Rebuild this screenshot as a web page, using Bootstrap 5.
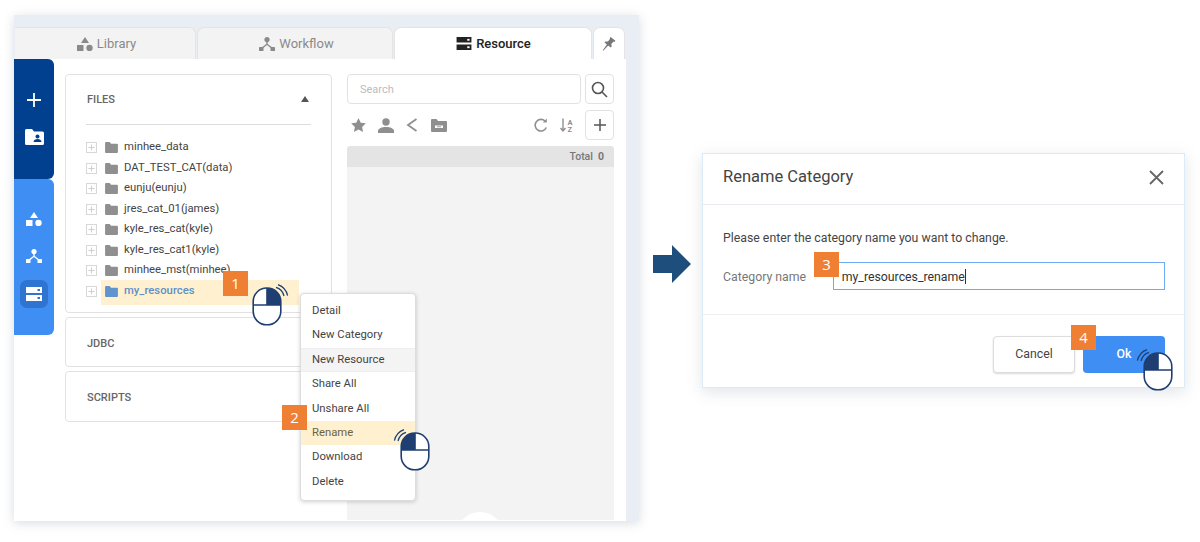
<!DOCTYPE html>
<html lang="en">
<head>
<meta charset="utf-8">
<title>Rename Category</title>
<link rel="stylesheet" href="https://cdn.jsdelivr.net/npm/bootstrap@5.3.0/dist/css/bootstrap.min.css">
<style>
html,body{height:542px;overflow:hidden;background:#fff}
body{font-family:Roboto,"Liberation Sans",sans-serif;font-size:11px;color:#444;position:relative}
.stage{padding:15px 0 0 14px;height:542px}
.win{width:625px;height:506px;background:#e9edf4;box-shadow:0 2px 10px rgba(120,130,150,.28);padding-top:12px;position:relative;overflow:hidden;flex:none}
.tabbar{height:32px;padding-left:1px;padding-right:13px;gap:1px}
.wtab{background:#f3f3f3;border:1px solid #e4e4e4;border-bottom:0;border-radius:7px 7px 0 0;color:#8a8a8a;font-size:13px;gap:4px;padding-left:3px}
.wtab svg{fill:#8a8a8a}
.t1{width:181px;border-left:0;border-top-left-radius:0}.t2{width:196px}
.t3{width:198px;background:#fff;color:#222;font-weight:500;padding-left:1px}
.t3 svg{fill:#222}
.t4{width:32px;background:#fff;padding-left:0}
.wbody{height:462px;margin:0 13px 0 0;background:#fff}
.rail{width:40px;flex:none;height:276px}
.rail-a{height:120px;background:#00408f;border-radius:0 6px 6px 0;padding-top:33px;gap:21px}
.rail-b{height:156px;background:#3e8ef3;border-radius:0 6px 6px 0;padding-top:33px;gap:14px}
.rail-on{width:28px;height:28px;background:#2f74d0;border-radius:7px}
.leftcol{width:267px;margin:15px 0 0 11px;flex:none;gap:4px}
.pane{border:1px solid #e2e2e2;border-radius:4px;box-shadow:none}
.pane-h{font-size:11px;font-weight:500;color:#666;padding:4px 0 0 21px}
.files{height:239px}
.files-h{height:50px;margin:0 20px 0 20px;padding:2px 1px 0 1px;border-bottom:1px solid #ddd;font-weight:500;color:#666}
.caret{width:0;height:0;border:4px solid transparent;border-top:0;border-bottom:6px solid #555;margin:-4px 1px 0 0}
.tree{padding:12.500px 0 0 20px;margin:0;list-style:none}
.tree li{height:20.5px;display:flex;align-items:center;color:#444;font-size:11.3px}
.pbox{width:11px;height:11px;margin-right:8px;flex:none}
.tree .fold{margin-right:6px;flex:none}
.tree .sel{color:#5f8fc9;background:#fff1cf;height:25px;margin:-1px 32px -3px -4px;width:199px;padding:0 0 2px 4px;font-weight:500}
.jdbc{height:50px}.scr{height:51px}
.rightcol{width:267px;margin:15px 0 0 15px;flex:none}
.srch{height:30px;gap:4px}
.srch .form-control{height:30px;font-size:11px;padding-left:12px;border-color:#e2e2e2;border-radius:4px;color:#444}
.srch .form-control::placeholder{color:#bcbcbc}
.sqbtn{width:29px;height:30px;padding:0;border:1px solid #e2e2e2;border-radius:4px;background:#fff;flex:none}
.tools{height:30px;margin-top:6px;padding-left:4px}
.tools svg{display:block}
.tools-l{gap:12px}
.tools-r{gap:10px}
.totbar{height:21px;background:#e4e4e4;border-radius:3px 3px 0 0;margin-top:6px;padding-right:10px;font-size:10.5px;font-weight:500;color:#777}
.totbar b{margin-left:5px;font-weight:700}
.grid-bg{height:353px;background:#f3f3f3;position:relative;overflow:hidden}
.blob{position:absolute;left:109px;top:345px;width:48px;height:48px;border-radius:50%;background:#fff}
.ctx{position:absolute;left:286px;top:278px;width:116px;height:208px;border:1px solid #ddd;border-radius:4px;box-shadow:0 1px 4px rgba(0,0,0,.18);padding:5px 0 6px;background:#fff;z-index:3}
.ctx .list-group-item{border:0;border-radius:0;padding:0 0 0 11px;height:24.4px;line-height:24.4px;font-size:11.3px;color:#444;background:transparent}
.ctx .hov{background:#f4f4f4;border-top:1px solid #eee;border-bottom:1px solid #eee;line-height:22.4px}
.ctx .ren{background:#fff1cf;color:#6d6243}
.step{position:absolute;width:25px;height:25px;background:#ef7f32;color:#fff;font-size:15px;display:flex;align-items:center;justify-content:center;z-index:5;font-family:"Open Sans",sans-serif}
.mou{position:absolute;z-index:6}
.tcaret{position:absolute;left:965px;top:269px;width:1px;height:15px;background:#333;z-index:4}
.arrow-box{margin:230px 0 0 14px;flex:none}
.dlg{width:483px;height:235px;margin:138px 0 0 11px;border:1px solid #dcebf8;border-radius:0;box-shadow:0 4px 14px rgba(120,130,150,.22);flex:none;position:relative}
.dlg-h{height:51px;padding:0 20px 4px 20px;border-bottom:1px solid #e6e9ee;font-size:16.5px;color:#444}
.dlg-b{height:110px;padding:24px 19px 0 20px;border-bottom:1px solid #eceef1;font-size:12.3px;color:#444}
.dlg-l{width:110px;color:#777;padding-top:2px}
.dlg-i{width:333px;height:28px;border:1px solid #6fabf5;border-radius:0;font-size:12.3px;padding:1px 8px 0;color:#333;box-shadow:none;background:#fff}
.frow{margin-top:15px}
.dlg-f{padding:21px 19px 0 0;gap:8px}
.bc{width:82px;height:37px;font-size:12.3px;border:1px solid #ddd;border-radius:4px;background:#fff;color:#444;box-shadow:0 1px 2px rgba(0,0,0,.15);padding:0}
.bo{width:82px;height:37px;font-size:12.3px;border:0;border-radius:4px;background:#3e8ef3;color:#fff;font-weight:500;padding:0}
</style>
</head>
<body>
<svg width="0" height="0" style="position:absolute">
<defs>
<symbol id="i-lib" viewBox="0 0 16 14"><path d="M8 0l4 6H4z"/><rect x="0" y="8" width="6.5" height="6"/><circle cx="12.5" cy="11" r="3.2"/></symbol>
<symbol id="i-flow" viewBox="0 0 16 14"><circle cx="8" cy="2.6" r="2.6"/><rect x="0" y="10" width="4.5" height="4" rx=".6"/><rect x="11.5" y="10" width="4.5" height="4" rx=".6"/><path d="M7.3 4h1.4v3L13 10.3l-1 1L8 8.1l-4 3.2-1-1L7.3 7z"/></symbol>
<symbol id="i-srv" viewBox="0 0 16 14"><path d="M0 0h16v6H0zM0 8h16v6H0z"/><rect x="11.5" y="2" width="2.5" height="2" fill="#fff"/><rect x="11.5" y="10" width="2.5" height="2" fill="#fff"/></symbol>
<symbol id="i-fold" viewBox="0 0 14 12"><path d="M0 1a1 1 0 0 1 1-1h4l1.500 2H13a1 1 0 0 1 1 1v8a1 1 0 0 1-1 1H1a1 1 0 0 1-1-1z"/></symbol>
<symbol id="i-plus" viewBox="0 0 11 11"><rect x=".5" y=".5" width="10" height="10" fill="#fff" stroke="#d8d8d8"/><path d="M5.500 2.500v6M2.500 5.500h6" stroke="#cfcfcf" fill="none"/></symbol>
<symbol id="i-mouse" viewBox="0 0 40 42">
<rect x="1.2" y="4" width="27.6" height="36.8" rx="13.5" fill="#fff" stroke="#1f3f73" stroke-width="1.6"/>
<path d="M15 4h.5A13.3 13.3 0 0 1 28.800 17.300V21H15z" fill="#1f3f73"/>
<path d="M1.200 21h27.600M15 4v17" stroke="#1f3f73" stroke-width="1.6" fill="none"/>
<path d="M24 3.400a12 12 0 0 1 8 8.600M26 .6a15 15 0 0 1 9.600 11" stroke="#1f3f73" stroke-width="1.2" fill="none"/>
</symbol>
</defs>
</svg>

<div class="stage d-flex align-items-start">
  <div class="win">
    <ul class="nav tabbar d-flex flex-nowrap">
      <li class="wtab t1 d-flex align-items-center justify-content-center"><svg width="16" height="14"><use href="#i-lib"/></svg>Library</li>
      <li class="wtab t2 d-flex align-items-center justify-content-center"><svg width="16" height="14"><use href="#i-flow"/></svg>Workflow</li>
      <li class="wtab t3 d-flex align-items-center justify-content-center"><svg width="16" height="13"><use href="#i-srv"/></svg>Resource</li>
      <li class="wtab t4 d-flex align-items-center justify-content-center"><svg width="14" height="16" viewBox="0 0 14 16" style="fill:#777"><path d="M8.600 1l4.800 3.800-.9 1.100-.9-.5-2.300 2.500.4 2.600-.9 1.100-2.600-2.100-4.900 5.200-.5-.4L4.900 8.600 2.500 6.600l.9-1.100 2.600.1 2.100-2.800-.4-.8z"/></svg></li>
    </ul>
    <div class="wbody d-flex">
      <div class="rail d-flex flex-column">
        <div class="rail-a d-flex flex-column align-items-center">
          <svg width="16" height="16" viewBox="0 0 16 16"><path d="M8 1v14M1 8h14" stroke="#fff" stroke-width="1.800" fill="none"/></svg>
          <svg width="19" height="16" viewBox="0 0 19 16"><path d="M0 1.500A1.500 1.500 0 0 1 1.500 0H7l2 2.500h8.500A1.500 1.500 0 0 1 19 4v10.500a1.500 1.500 0 0 1-1.500 1.500h-16A1.500 1.500 0 0 1 0 14.500z" fill="#fff"/><circle cx="12.500" cy="7.500" r="2" fill="#00408f"/><path d="M8.500 13c0-2 2-3 4-3s4 1 4 3z" fill="#00408f"/></svg>
        </div>
        <div class="rail-b d-flex flex-column align-items-center">
          <svg width="16" height="14" style="fill:#fff"><use href="#i-lib"/></svg>
          <svg width="16" height="16" viewBox="0 0 16 14" style="fill:#fff;margin-top:8px"><use href="#i-flow"/></svg>
          <div class="rail-on d-flex align-items-center justify-content-center" style="margin-top:2px"><svg width="16" height="14" viewBox="0 0 16 14"><path d="M0 0h16v6H0zM0 8h16v6H0z" fill="#fff"/><rect x="11.500" y="2" width="2.500" height="2" fill="#2f74d0"/><rect x="11.500" y="10" width="2.500" height="2" fill="#2f74d0"/></svg></div>
        </div>
      </div>
      <div class="leftcol d-flex flex-column">
        <div class="card pane files">
          <div class="files-h d-flex align-items-center justify-content-between"><span>FILES</span><span class="caret"></span></div>
          <ul class="tree">
            <li><svg class="pbox"><use href="#i-plus"/></svg><svg class="fold" width="13" height="11" fill="#8f8f8f"><use href="#i-fold"/></svg>minhee_data</li>
            <li><svg class="pbox"><use href="#i-plus"/></svg><svg class="fold" width="13" height="11" fill="#8f8f8f"><use href="#i-fold"/></svg>DAT_TEST_CAT(data)</li>
            <li><svg class="pbox"><use href="#i-plus"/></svg><svg class="fold" width="13" height="11" fill="#8f8f8f"><use href="#i-fold"/></svg>eunju(eunju)</li>
            <li><svg class="pbox"><use href="#i-plus"/></svg><svg class="fold" width="13" height="11" fill="#8f8f8f"><use href="#i-fold"/></svg>jres_cat_01(james)</li>
            <li><svg class="pbox"><use href="#i-plus"/></svg><svg class="fold" width="13" height="11" fill="#8f8f8f"><use href="#i-fold"/></svg>kyle_res_cat(kyle)</li>
            <li><svg class="pbox"><use href="#i-plus"/></svg><svg class="fold" width="13" height="11" fill="#8f8f8f"><use href="#i-fold"/></svg>kyle_res_cat1(kyle)</li>
            <li><svg class="pbox"><use href="#i-plus"/></svg><svg class="fold" width="13" height="11" fill="#8f8f8f"><use href="#i-fold"/></svg>minhee_mst(minhee)</li>
            <li><svg class="pbox"><use href="#i-plus"/></svg><span class="sel d-flex align-items-center"><svg class="fold" width="13" height="11" fill="#5f94cf"><use href="#i-fold"/></svg>my_resources</span></li>
          </ul>
        </div>
        <div class="card pane jdbc pane-h justify-content-center">JDBC</div>
        <div class="card pane scr pane-h justify-content-center">SCRIPTS</div>
      </div>
      <div class="rightcol d-flex flex-column">
        <div class="srch d-flex">
          <input class="form-control" placeholder="Search">
          <button class="btn sqbtn d-flex align-items-center justify-content-center" aria-label="Search"><svg width="17" height="17" viewBox="0 0 17 17" fill="none" stroke="#555" stroke-width="1.6"><circle cx="7" cy="7" r="5.500"/><path d="M11 11l5 5"/></svg></button>
        </div>
        <div class="tools d-flex align-items-center justify-content-between">
          <div class="tools-l d-flex align-items-center">
            <svg width="15" height="14" viewBox="0 0 24 23" fill="#8f8f8f"><path d="M12 0l3.700 7.600 8.300 1.200-6 5.900 1.400 8.300L12 19l-7.400 4L6 14.700 0 8.800l8.300-1.200z"/></svg>
            <svg width="16" height="15" viewBox="0 0 16 15" fill="#8f8f8f"><circle cx="8" cy="4" r="3.700"/><path d="M0 15v-2c0-2.500 4-4 8-4s8 1.500 8 4v2z"/></svg>
            <svg width="11" height="14" viewBox="0 0 11 14" fill="none" stroke="#8f8f8f" stroke-width="1.800"><path d="M10.500 1L2 7l8.500 6"/></svg>
            <svg width="16" height="13" viewBox="0 0 16 13" fill="#8f8f8f" style="margin-left:2px"><path d="M0 1a1 1 0 0 1 1-1h4.500L7 2h8a1 1 0 0 1 1 1v9a1 1 0 0 1-1 1H1a1 1 0 0 1-1-1z"/><path d="M4 6.500h8v2.500H4z" fill="#fff"/><path d="M6 7.400h4v.8H6z" fill="#8f8f8f"/></svg>
          </div>
          <div class="tools-r d-flex align-items-center">
            <svg width="14" height="14" viewBox="0 0 14 14" fill="none" stroke="#8f8f8f" stroke-width="1.600" style="margin-right:2px"><path d="M12.300 9.500A5.800 5.800 0 1 1 11 3"/><path d="M12.800 0.500v4h-4z" fill="#8f8f8f" stroke="none"/></svg>
            <svg width="15" height="15" viewBox="0 0 15 14"><path d="M3 0v12M0.500 9.500L3 12.500l2.500-3" fill="none" stroke="#8f8f8f" stroke-width="1.400"/><text x="7.500" y="6" font-size="7.500" font-weight="700" fill="#8f8f8f" font-family="Roboto">A</text><text x="7.500" y="13.500" font-size="7.500" font-weight="700" fill="#8f8f8f" font-family="Roboto">Z</text></svg>
            <button class="btn sqbtn d-flex align-items-center justify-content-center" aria-label="Add"><svg width="12" height="12" viewBox="0 0 12 12"><path d="M6 0v12M0 6h12" stroke="#555" stroke-width="1.500" fill="none"/></svg></button>
          </div>
        </div>
        <div class="totbar d-flex align-items-center justify-content-end">Total<b>0</b></div>
        <div class="grid-bg"><span class="blob"></span></div>
      </div>
    </div>
    <div class="list-group ctx">
      <div class="list-group-item">Detail</div>
      <div class="list-group-item">New Category</div>
      <div class="list-group-item hov">New Resource</div>
      <div class="list-group-item">Share All</div>
      <div class="list-group-item">Unshare All</div>
      <div class="list-group-item ren">Rename</div>
      <div class="list-group-item">Download</div>
      <div class="list-group-item">Delete</div>
    </div>
  </div>

  <div class="arrow-box"><svg width="38" height="38" viewBox="0 0 38 38" style="display:block"><path d="M0 10h19V0l19 19-19 19V28H0z" fill="#1d4e7c"/></svg></div>

  <div class="card dlg">
    <div class="dlg-h d-flex align-items-center justify-content-between"><span>Rename Category</span><svg width="15" height="15" viewBox="0 0 15 15"><path d="M1 1l13 13M14 1L1 14" stroke="#666" stroke-width="1.800" fill="none"/></svg></div>
    <div class="dlg-b">
      <div>Please enter the category name you want to change.</div>
      <div class="frow d-flex align-items-center"><label class="dlg-l">Category name</label><input class="form-control dlg-i" value="my_resources_rename"></div>
    </div>
    <div class="dlg-f d-flex justify-content-end"><button class="btn bc">Cancel</button><button class="btn bo">Ok</button></div>
  </div>
</div>

<span class="tcaret"></span>
<span class="step" style="left:223px;top:271px">1</span>
<span class="step" style="left:282px;top:405px">2</span>
<span class="step" style="left:814px;top:252px">3</span>
<span class="step" style="left:1071px;top:325px">4</span>
<svg class="mou" width="40" height="42" style="left:252px;top:284px"><use href="#i-mouse"/></svg>
<svg class="mou" width="40" height="42" style="left:390px;top:429px;transform:scaleX(-1)"><use href="#i-mouse"/></svg>
<svg class="mou" width="40" height="42" style="left:1133px;top:349px;transform:scaleX(-1)"><use href="#i-mouse"/></svg>
</body>
</html>
